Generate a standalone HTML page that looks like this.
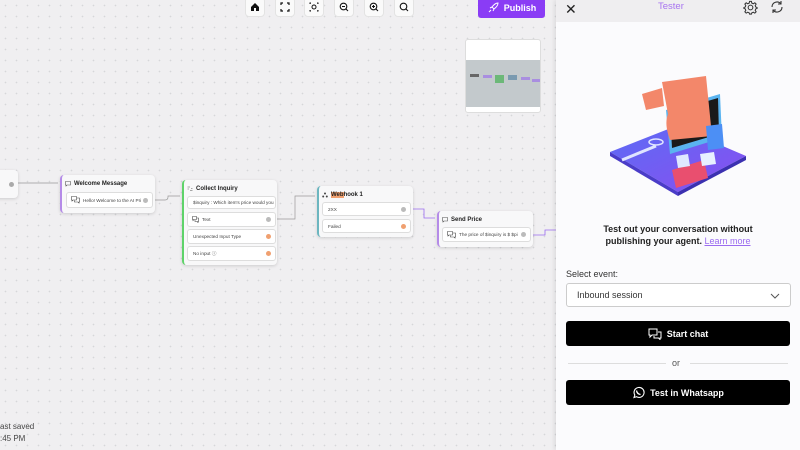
<!DOCTYPE html>
<html><head><meta charset="utf-8"><style>
*{box-sizing:border-box;margin:0;padding:0}
body{width:800px;height:450px;overflow:hidden;position:relative;font-family:"Liberation Sans",sans-serif;background:#f0eff1;
background-image:radial-gradient(circle,#d6d6d9 0.7px,transparent 0.9px);background-size:11px 11px;}
.a{position:absolute}
.node{position:absolute;background:#f8f8f9;border-radius:4px;box-shadow:0 1px 3px rgba(0,0,0,.15);}
.title{position:absolute;left:12px;font-size:6px;font-weight:bold;color:#222}
.ic{position:absolute;left:3px;top:6px}
.row{position:absolute;background:#fff;border:1px solid #ddd;border-radius:3px;font-size:4.7px;color:#444;padding-left:5px;display:flex;align-items:center}
.row svg{position:absolute;left:4px}
.dot{position:absolute;right:4px;top:50%;margin-top:-2.5px;width:5px;height:5px;border-radius:50%;background:#bbb}
.odot{background:#f0a070}
.tb{position:absolute;top:-3px;width:20px;height:20px;background:#fafafa;border:1px solid #e3e3e3;border-radius:4px;display:flex;align-items:center;justify-content:center}
.btn{position:absolute;left:566px;width:224px;height:25px;background:#000;border-radius:3px;color:#fff;font-size:9px;font-weight:bold;display:flex;align-items:center;justify-content:center;gap:5px}
</style></head><body>
<svg class="a" style="left:0;top:0" width="556" height="450">
<g fill="none" stroke="#999" stroke-width="0.7">
<path d="M18 183 H58"/><path d="M155 200 H165 Q168 200 168 197 V196 H180"/>
<path d="M277 219 H295 V196 H315"/>
</g>
<g fill="none" stroke="#9a6cf0" stroke-width="0.8">
<path d="M413 209 H424 V218 H435"/><path d="M530 235 H545 V230 H556"/>
</g>
</svg>
<div class="node" style="left:-10px;top:170px;width:28px;height:28px"><div class="dot" style="right:4px;background:#aaa"></div></div>
<div class="node" style="left:60px;top:175px;width:95px;height:38px;border-left:2px solid #b58be8">
<svg class="ic" width="6" height="6" viewBox="0 0 6 6" fill="none" stroke="#555" stroke-width="0.6"><path d="M0.5 0.5H5.5V4H2L1 5V4H0.5Z"/></svg>
<div class="title" style="top:6px">Welcome Message</div>
<div class="row" style="left:4px;top:17px;width:87px;height:16px;padding-left:16px"><svg width="9" height="8" viewBox="0 0 9 8" fill="none" stroke="#444" stroke-width="0.6"><path d="M0.5 0.5H5.5V4H2L1 5V4H0.5Z M6 2H8.5V6H8V7L7 6H3.5V4.5"/></svg>Hello! Welcome to the AI Pri<div class="dot"></div></div></div>
<div class="node" style="left:182px;top:180px;width:95px;height:85px;border-left:2px solid #5fd36a">
<svg class="ic" width="6" height="6" viewBox="0 0 6 6" fill="none" stroke="#555" stroke-width="0.6"><path d="M0.5 1H3M0.5 3H2M3 4.5H5.5M4 2.5H5.5"/></svg>
<div class="title" style="top:6px">Collect Inquiry</div>
<div class="row" style="left:3px;top:16px;width:89px;height:13px;overflow:hidden;white-space:nowrap">$inquiry : Which item's price would you</div>
<div class="row" style="left:3px;top:32px;width:89px;height:15px;padding-left:14px"><svg width="7" height="7" viewBox="0 0 7 7" fill="none" stroke="#444" stroke-width="0.6"><path d="M0.5 0.5H4.5V3.5H2L1 4.5V3.5H0.5Z M5 2H6.5V5.5H6V6.5L5 5.5H3V4"/></svg>Text<div class="dot"></div></div>
<div class="row" style="left:3px;top:49px;width:89px;height:15px">Unexpected Input Type<div class="dot odot"></div></div>
<div class="row" style="left:3px;top:66px;width:89px;height:15px">No input ⓘ<div class="dot odot"></div></div></div>
<div class="node" style="left:317px;top:186px;width:96px;height:51px;border-left:2px solid #6cb6c0">
<svg class="ic" width="6" height="6" viewBox="0 0 6 6" fill="#444"><circle cx="3" cy="1.5" r="1"/><circle cx="1.2" cy="4.5" r="1"/><circle cx="4.8" cy="4.5" r="1"/></svg>
<div class="title" style="top:6px"><span style="background:#f0a070">Web</span>hook 1</div>
<div class="row" style="left:3px;top:16px;width:89px;height:14px">2XX<div class="dot"></div></div>
<div class="row" style="left:3px;top:33px;width:89px;height:14px">Failed<div class="dot odot"></div></div></div>
<div class="node" style="left:437px;top:211px;width:96px;height:36px;border-left:2px solid #b58be8">
<svg class="ic" width="6" height="6" viewBox="0 0 6 6" fill="none" stroke="#555" stroke-width="0.6"><path d="M0.5 0.5H5.5V4H2L1 5V4H0.5Z"/></svg>
<div class="title" style="top:6px">Send Price</div>
<div class="row" style="left:3px;top:16px;width:89px;height:15px;padding-left:16px"><svg width="9" height="8" viewBox="0 0 9 8" fill="none" stroke="#444" stroke-width="0.6"><path d="M0.5 0.5H5.5V4H2L1 5V4H0.5Z M6 2H8.5V6H8V7L7 6H3.5V4.5"/></svg>The price of $inquiry is $ $pi<div class="dot"></div></div></div>
<div class="a" style="left:465px;top:39px;width:76px;height:74px;background:#fff;border:1px solid #ddd;border-radius:3px">
<div class="a" style="left:0;top:20px;width:74px;height:47px;background:#c3c9cc"></div>
<div class="a" style="left:4px;top:34px;width:9px;height:3px;background:#666"></div>
<div class="a" style="left:17px;top:35px;width:9px;height:3px;background:#a98ee0"></div>
<div class="a" style="left:29px;top:35px;width:9px;height:8px;background:#6cb878"></div>
<div class="a" style="left:42px;top:35px;width:9px;height:5px;background:#7a9ab0"></div>
<div class="a" style="left:55px;top:37px;width:9px;height:3px;background:#a98ee0"></div>
<div class="a" style="left:66px;top:39px;width:8px;height:3px;background:#a98ee0"></div></div>
<div class="tb" style="left:245px"><svg width="10" height="10" viewBox="0 0 10 10"><path d="M1 5 L5 1 L9 5 V9 H6 V6 H4 V9 H1Z" fill="#111"/></svg></div>
<div class="tb" style="left:275px"><svg width="10" height="10" viewBox="0 0 10 10" fill="none" stroke="#111" stroke-width="1.2"><path d="M1 3V1H3M7 1H9V3M9 7V9H7M3 9H1V7"/></svg></div>
<div class="tb" style="left:304px"><svg width="10" height="10" viewBox="0 0 10 10" fill="none" stroke="#111" stroke-width="1"><circle cx="5" cy="5" r="2"/><path d="M1 2V1H2M8 1H9V2M9 8V9H8M2 9H1V8"/></svg></div>
<div class="tb" style="left:334px"><svg width="10" height="10" viewBox="0 0 10 10" fill="none" stroke="#111" stroke-width="1.1"><circle cx="4.5" cy="4.5" r="3.3"/><path d="M3 4.5H6M7 7L9 9"/></svg></div>
<div class="tb" style="left:364px"><svg width="10" height="10" viewBox="0 0 10 10" fill="none" stroke="#111" stroke-width="1.1"><circle cx="4.5" cy="4.5" r="3.3"/><path d="M3 4.5H6M4.5 3V6M7 7L9 9"/></svg></div>
<div class="tb" style="left:394px"><svg width="10" height="10" viewBox="0 0 10 10" fill="none" stroke="#111" stroke-width="1.1"><circle cx="4.5" cy="4.5" r="3.3"/><path d="M7 7L9 9"/></svg></div>
<div class="a" style="left:478px;top:-3px;width:67px;height:21px;background:#8a3cf5;border-radius:3px;color:#fff;font-size:9px;font-weight:bold;display:flex;align-items:center;justify-content:center;gap:5px"><svg width="12" height="12" viewBox="0 0 12 12" fill="none" stroke="#fff" stroke-width="1"><path d="M4 8 L2 10 M5 5 Q8 1 11 1 Q11 4 7 7 Z M3 6 L5 5 M6 9 L7 7"/></svg>Publish</div>
<div class="a" style="left:0;top:421px;font-size:8px;color:#444;line-height:12px">ast saved<br>:45 PM</div>
<div class="a" style="left:556px;top:0;width:244px;height:450px;background:#fbfbfd;box-shadow:-2px 0 4px rgba(0,0,0,.08)">
<div class="a" style="left:0;top:0;width:244px;height:22px;background:#efeef0"></div>
<div class="a" style="left:9px;top:1px;font-size:14px;color:#222">✕</div>
<div class="a" style="left:102px;top:1px;font-size:9.5px;color:#a774f0">Tester</div>
<svg class="a" style="left:187px;top:0" width="15" height="15" viewBox="0 0 16 16" fill="none" stroke="#333" stroke-width="1.1"><circle cx="8" cy="8" r="2.5"/><path d="M7 1.5H9L9.4 3.3L11 4L12.6 3L14 4.4L13 6L13.7 7.6L15 8V9L13.7 9.4L13 11L14 12.6L12.6 14L11 13L9.4 13.7L9 15H7L6.6 13.7L5 13L3.4 14L2 12.6L3 11L2.3 9.4L1 9V8L2.3 7.6L3 6L2 4.4L3.4 3L5 4L6.6 3.3Z"/></svg>
<svg class="a" style="left:214px;top:0" width="14" height="14" viewBox="0 0 14 14" fill="none" stroke="#333" stroke-width="1.1"><path d="M2 7A5 5 0 0 1 11 4M12 7A5 5 0 0 1 3 10M11 1V4H8M3 13V10H6"/></svg>
<svg class="a" style="left:52px;top:74px" width="140" height="122" viewBox="0 0 140 122">
<defs><linearGradient id="g" x1="0" y1="0" x2="1" y2="1"><stop offset="0" stop-color="#5b6cf5"/><stop offset="1" stop-color="#8a4ef0"/></linearGradient></defs>
<path d="M2 78 L68 52 L138 82 L70 118 Z" fill="url(#g)"/>
<path d="M2 78 L70 118 L70 122 L2 82Z" fill="#4a3cc8"/>
<path d="M70 118 L138 82 L138 86 L70 122Z" fill="#3b30b0"/>
<path d="M58 36 L112 20 L114 64 L62 80 Z" fill="#5ab4f0"/>
<path d="M62 38 L110 24 L111 60 L64 74 Z" fill="#1a1a1a"/>
<path d="M54 8 L98 2 L104 62 L62 66 Q56 50 60 40 Z" fill="#f3876a"/>
<path d="M34 20 L54 14 L56 32 L38 36 Z" fill="#f3876a"/>
<path d="M98 52 L114 50 L116 74 L100 76Z" fill="#4c8ff5"/>
<path d="M64 96 L96 86 L100 104 L68 114Z" fill="#e94f6f"/>
<path d="M92 80 L106 78 L108 90 L94 92Z" fill="#e8f0ff"/>
<path d="M68 82 L80 80 L82 92 L70 94Z" fill="#dfe8ff"/>
<path d="M14 86 L48 72" stroke="#dfe4ff" stroke-width="3"/>
<ellipse cx="48" cy="68" rx="7" ry="3" fill="none" stroke="#dfe4ff" stroke-width="1.5"/>
</svg>
<div class="a" style="left:0;top:223px;width:244px;text-align:center;font-size:9px;font-weight:bold;color:#222;line-height:12px">Test out your conversation without<br>publishing your agent. <span style="color:#9b6cf0;font-weight:normal;text-decoration:underline">Learn more</span></div>
<div class="a" style="left:10px;top:269px;font-size:9px;color:#333">Select event:</div>
<div class="a" style="left:10px;top:283px;width:225px;height:24px;border:1px solid #ccc;border-radius:3px;background:#fff;font-size:9px;color:#333;padding:6px 0 0 10px">Inbound session
<svg class="a" style="right:10px;top:9px" width="10" height="6" viewBox="0 0 10 6" fill="none" stroke="#555"><path d="M1 1L5 5L9 1"/></svg></div>
<div class="a" style="left:12px;top:363px;width:98px;height:1px;background:#ddd"></div>
<div class="a" style="left:134px;top:363px;width:98px;height:1px;background:#ddd"></div>
<div class="a" style="left:116px;top:358px;font-size:9px;color:#555">or</div>
</div>
<div class="btn" style="top:321px"><svg width="14" height="12" viewBox="0 0 14 12" fill="none" stroke="#fff" stroke-width="1"><path d="M1 1H9V7H4L2 9V7H1Z M10 4H13V10H12V11.5L10.5 10H6V8"/></svg>Start chat</div>
<div class="btn" style="top:380px"><svg width="13" height="13" viewBox="0 0 13 13" fill="none" stroke="#fff" stroke-width="1.1"><path d="M2 11.5L2.8 9A5 5 0 1 1 4.5 10.7Z"/><path d="M4.5 4.5Q5 8 8.5 8.5" stroke-width="1.3"/></svg>Test in Whatsapp</div>
</body></html>
